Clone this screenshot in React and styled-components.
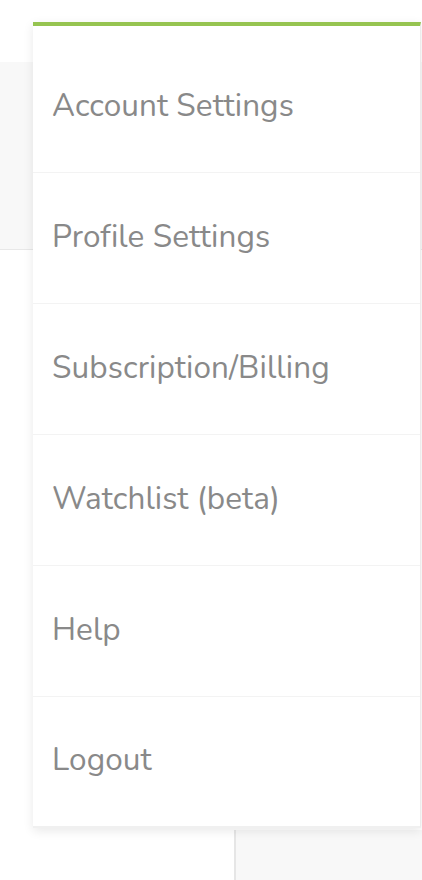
import React from "react";
import styled, { createGlobalStyle } from "styled-components";

const Global = createGlobalStyle`
  html, body { margin: 0; padding: 0; background: #ffffff; }
  body { font-family: "Nunito", Lato, "Noto Sans", sans-serif; }
`;

const Page = styled.div`
  position: relative;
  width: 422px;
  height: 880px;
  overflow: hidden;
  display: flex;
  flex-direction: column;
`;

const TopSpace = styled.div`
  height: 62px;
  background: #ffffff;
`;

const GrayBand = styled.div`
  height: 187px;
  background: #f8f8f8;
  border-bottom: 1px solid #e8e8e8;
`;

const Middle = styled.div`
  height: 580px;
  background: #ffffff;
`;

const Lower = styled.div`
  flex: 1;
  display: grid;
  grid-template-columns: 234px 2px 1fr;
`;

const LowerLeft = styled.div`
  background: #ffffff;
`;

const Rule = styled.div`
  background: #e6e6e6;
`;

const LowerRight = styled.div`
  background: #f8f8f8;
`;

const Menu = styled.ul`
  position: absolute;
  top: 22px;
  left: 33px;
  width: 387px;
  margin: 0;
  padding: 16px 0 0;
  list-style: none;
  background: #ffffff;
  border-top: 4px solid #96c451;
  border-right: 1px solid #ececec;
  border-bottom: 2px solid #f0f0f0;
  box-shadow: 0 3px 10px rgba(0, 0, 0, 0.09);
`;

const Item = styled.li`
  box-sizing: border-box;
  height: ${(p) => (p.$last ? "129px" : "131px")};
  display: flex;
  align-items: center;
  padding: 0 19px 4px;
  border-bottom: ${(p) => (p.$last ? "none" : "1px solid #f3f3f3")};
  font-family: "Nunito", Lato, "Noto Sans", sans-serif;
  font-size: 31.5px;
  color: #898989;
  letter-spacing: 0.1px;
`;

const items = [
  "Account Settings",
  "Profile Settings",
  "Subscription/Billing",
  "Watchlist (beta)",
  "Help",
  "Logout",
];

export default function App() {
  return (
    <Page>
      <Global />
      <TopSpace />
      <GrayBand />
      <Middle />
      <Lower>
        <LowerLeft />
        <Rule />
        <LowerRight />
      </Lower>
      <Menu>
        {items.map((t, i) => (
          <Item key={t} $last={i === items.length - 1}>
            {t}
          </Item>
        ))}
      </Menu>
    </Page>
  );
}
